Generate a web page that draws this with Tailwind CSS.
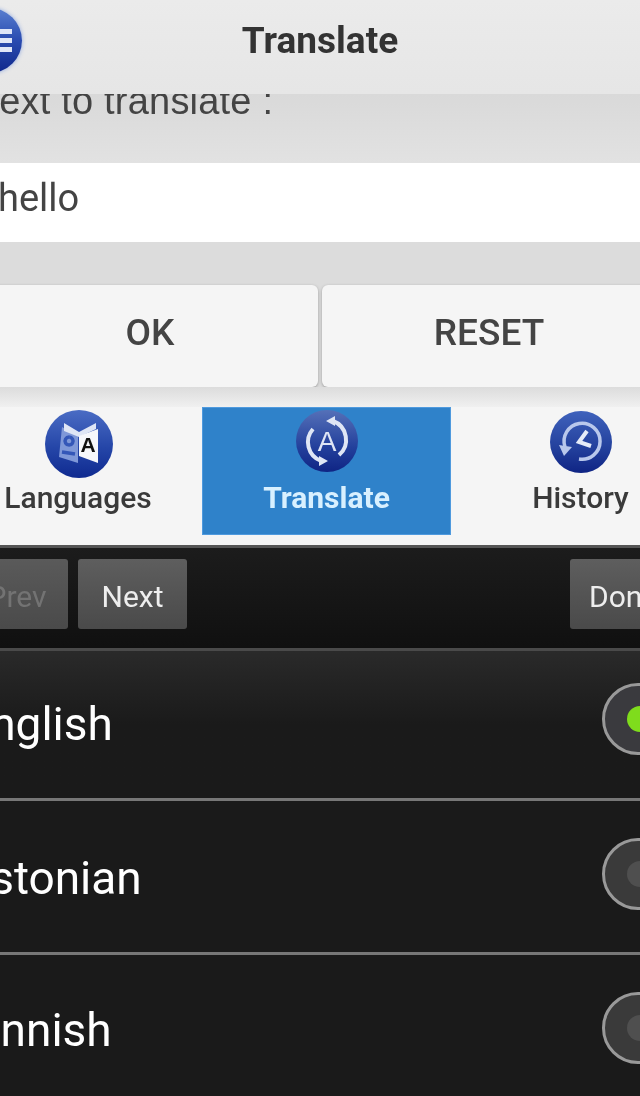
<!DOCTYPE html>
<html lang="en">

<head>
  <meta charset="UTF-8" />
  <meta name="viewport" content="width=device-width, initial-scale=1.0" />
  <title>Translate</title>
  <script src="https://cdn.jsdelivr.net/npm/@tailwindcss/browser@4"></script>
</head>

<body class="bg-[#1a1a1a] font-['Roboto',sans-serif]">
  <div class="w-[640px] h-[1096px] overflow-hidden flex flex-col blur-[0.6px]">

    <!-- header -->
    <header class="relative z-10 h-[94px] shrink-0 flex items-center bg-linear-to-b from-[#ebebeb] to-[#e6e6e6]">
      <button class="absolute left-[-46px] top-[8px] w-[68px] h-[65px] rounded-full bg-linear-to-b from-[#5a7fd0] via-[#2a4bb0] to-[#10288c] shadow-[0_0_4px_#8fa8e0] flex flex-col justify-center items-end gap-[4px] pr-[10px]">
        <span class="w-[14px] h-[5px] bg-[#dfe6f8]"></span>
        <span class="w-[14px] h-[5px] bg-[#dfe6f8]"></span>
        <span class="w-[14px] h-[5px] bg-[#dfe6f8]"></span>
      </button>
      <h1 class="w-full text-center text-[37px] font-bold text-[#333] -mt-[13px]">Translate</h1>
    </header>

    <!-- form -->
    <section class="h-[69px] shrink-0 bg-linear-to-b from-[#d9d9d9] to-[#e2e2e2] overflow-hidden">
      <p class="-ml-[20px] -mt-[13px] text-[38px] leading-[40px] tracking-[0.2px] text-[#444] font-['Liberation_Sans',sans-serif] whitespace-nowrap">Text to translate :</p>
    </section>
    <div class="h-[79px] shrink-0 bg-white flex items-center">
      <span class="-ml-[2px] -mt-[8px] text-[38px] text-[#444]">hello</span>
    </div>
    <div class="h-[43px] shrink-0 bg-[#dcdcdc]"></div>

    <!-- buttons -->
    <div class="h-[102px] shrink-0 bg-[#dcdcdc] flex gap-[4px] -ml-[10px] -mr-[10px]">
      <button class="w-[328px] rounded-[6px] bg-[#f5f5f5] shadow-[0_1px_3px_#999] text-[37px] font-medium text-[#444] pb-[6px] pr-[8px]">OK</button>
      <button class="flex-1 rounded-[6px] bg-[#f5f5f5] shadow-[0_1px_3px_#999] text-[37px] font-medium text-[#444] pb-[6px] pl-[6px]">RESET</button>
    </div>
    <div class="h-[20px] shrink-0 bg-linear-to-b from-[#dcdcdc] to-[#f0f0f0]"></div>

    <!-- tabs -->
    <nav class="h-[138px] shrink-0 bg-[#f5f5f5] flex items-start">
      <a class="w-[202px] h-[128px] flex flex-col items-center pt-[2px] pr-[46px]">
        <svg width="70" height="70" viewBox="0 0 70 70" class="ml-[2px]">
          <defs>
            <linearGradient id="g1" x1="0" y1="0" x2="0" y2="1">
              <stop offset="0" stop-color="#4a6cc4" />
              <stop offset="0.55" stop-color="#2546a8" />
              <stop offset="1" stop-color="#0f2a90" />
            </linearGradient>
          </defs>
          <circle cx="35" cy="35" r="34" fill="url(#g1)" />
          <path d="M18 18 L34 27 L34 54 L15 48 Z" fill="#7f98d8" />
          <path d="M20 14 L35 23 L52 14 L52 20 L35 28 L20 22 Z" fill="#dfe6f5" />
          <path d="M35 27 L54 20 L54 54 L35 47 Z" fill="#f6f7fb" />
          <path d="M25 28 a4 4 0 1 0 .1 0 M18 43 L31 45" stroke="#3457b8" stroke-width="3.5" fill="none" />
          <text x="44" y="43" text-anchor="middle" font-family="Liberation Sans" font-weight="700" font-size="21" fill="#111">A</text>
        </svg>
        <span class="text-[30px] leading-[32px] font-medium text-[#3a3a3a] whitespace-nowrap mt-[3px]">Languages</span>
      </a>
      <a class="w-[249px] h-[128px] bg-[#2f82ca] border border-[#4f9ade] flex flex-col items-center pt-[1px]">
        <svg width="64" height="64" viewBox="0 0 64 64">
          <defs>
            <linearGradient id="g2" x1="0" y1="0" x2="0" y2="1">
              <stop offset="0" stop-color="#5570b8" />
              <stop offset="0.6" stop-color="#23409c" />
              <stop offset="1" stop-color="#0f2484" />
            </linearGradient>
          </defs>
          <circle cx="32" cy="32" r="31" fill="url(#g2)" />
          <path d="M38 12 A20 20 0 0 1 44 46 M26 52 A20 20 0 0 1 18 20" stroke="#dfe6f5" stroke-width="4" fill="none" />
          <path d="M31 12 L40 7 L40 17 Z M33 52 L24 47 L24 57 Z" fill="#dfe6f5" />
          <text x="32" y="42" text-anchor="middle" font-family="Liberation Sans" font-size="28" fill="#dfe6f5">A</text>
        </svg>
        <span class="text-[30px] leading-[32px] font-bold text-[#d8f0ff] mt-[9px]">Translate</span>
      </a>
      <a class="flex-1 h-[128px] flex flex-col items-center pt-[2px] pl-[70px]">
        <svg width="64" height="64" viewBox="0 0 64 64">
          <defs>
            <linearGradient id="g3" x1="0" y1="0" x2="0" y2="1">
              <stop offset="0" stop-color="#3f62bc" />
              <stop offset="0.6" stop-color="#23409c" />
              <stop offset="1" stop-color="#0f2484" />
            </linearGradient>
          </defs>
          <circle cx="32" cy="33" r="31" fill="url(#g3)" />
          <path d="M16 38 A18 18 0 1 1 30 50" stroke="#b9c8ec" stroke-width="3.5" fill="none" />
          <path d="M10 36 L23 38 L15 47 Z" fill="#b9c8ec" />
          <path d="M38 22 L30 33 L42 37" stroke="#e6ecf8" stroke-width="4" fill="none" />
        </svg>
        <span class="text-[30px] leading-[32px] font-medium text-[#3a3a3a] mt-[9px]">History</span>
      </a>
    </nav>

    <!-- picker toolbar -->
    <div class="h-[103px] shrink-0 border-t-[3px] border-[#555] bg-linear-to-b from-[#1c1c1c] to-[#101010] flex items-start pt-[11px]">
      <button class="-ml-[20px] w-[88px] h-[70px] rounded-[3px] bg-linear-to-b from-[#5a5a5a] to-[#4a4a4a] text-[30px] text-[#737373] pt-[4px] pr-[14px]">Prev</button>
      <button class="ml-[10px] w-[109px] h-[70px] rounded-[3px] bg-linear-to-b from-[#5e5e5e] to-[#4a4a4a] text-[30px] text-[#eee] pt-[4px]">Next</button>
      <button class="ml-auto -mr-[20px] w-[90px] h-[70px] rounded-[3px] bg-linear-to-b from-[#5e5e5e] to-[#4a4a4a] text-[30px] text-[#eee] text-left pl-[19px] pt-[4px]">Done</button>
    </div>

    <!-- options -->
    <ul class="flex-1 bg-[#1a1a1a] text-white text-[46px]">
      <li class="h-[150px] border-t-[3px] border-[#4a4a4a] bg-linear-to-b from-[#2a2a2a] via-[#1a1a1a] to-[#1a1a1a] flex items-center justify-between">
        <span class="-ml-[36px] -mt-[1px]">English</span>
        <span class="-mr-[38px] -mt-[11px] w-[76px] h-[72px] rounded-full border-[3px] border-[#999] bg-[#3a3a3e] flex items-center justify-center"><i class="w-[26px] h-[26px] rounded-full bg-[#7fdc1c]"></i></span>
      </li>
      <li class="h-[154px] border-t-[3px] border-[#777] flex items-center justify-between">
        <span class="-ml-[36px] mt-[3px]">Estonian</span>
        <span class="-mr-[38px] -mt-[5px] w-[76px] h-[72px] rounded-full border-[3px] border-[#999] bg-[#3a3a3a] flex items-center justify-center"><i class="w-[26px] h-[26px] rounded-full bg-[#4f4f4f]"></i></span>
      </li>
      <li class="h-[154px] border-t-[3px] border-[#777] flex items-center justify-between">
        <span class="-ml-[36px] -mt-[1px]">Finnish</span>
        <span class="-mr-[38px] -mt-[5px] w-[76px] h-[72px] rounded-full border-[3px] border-[#999] bg-[#3a3a3a] flex items-center justify-center"><i class="w-[26px] h-[26px] rounded-full bg-[#4f4f4f]"></i></span>
      </li>
    </ul>
  </div>
</body>

</html>
